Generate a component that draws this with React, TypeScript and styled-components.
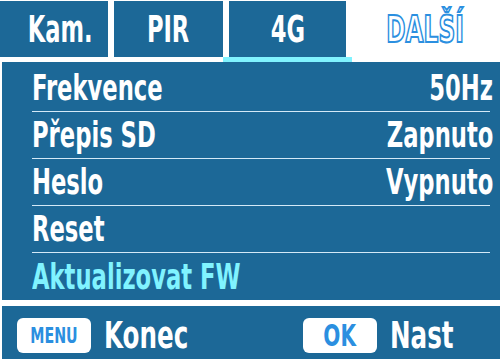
import styled, { createGlobalStyle } from 'styled-components'

const GlobalStyle = createGlobalStyle`
  html, body {
    margin: 0;
    padding: 0;
    background: #ffffff;
  }
  body {
    font-family: 'DejaVu Sans Condensed', 'DejaVu Sans', sans-serif;
    font-weight: 700;
  }
`

const BLUE = '#1c6897'
const CYAN = '#80f3ff'
const ACCENT = '#2b8fe0'

// the display font is very narrow, so squeeze the condensed face horizontally
const Squeeze = styled.span<{ $origin?: 'left' | 'right' | 'center'; $scale?: number }>`
  display: inline-block;
  white-space: nowrap;
  transform: scaleX(${(p) => p.$scale ?? 0.7});
  transform-origin: ${(p) => p.$origin ?? 'left'} center;
`

const Screen = styled.div`
  width: 500px;
  height: 359px;
  display: flex;
  flex-direction: column;
  overflow: hidden;
`

const TabBar = styled.div`
  display: flex;
  height: 57px;
  gap: 6px;
`

const Tab = styled.div<{ $width: number; $active?: boolean; $selected?: boolean; $shift?: number }>`
  position: relative;
  width: ${(p) => p.$width}px;
  display: flex;
  align-items: center;
  justify-content: center;
  padding-left: ${(p) => p.$shift ?? 0}px;
  box-sizing: border-box;
  background: ${(p) => (p.$selected ? '#ffffff' : BLUE)};
  color: #ffffff;
  font-size: 38px;
  margin-top: 1px;

  ${(p) =>
    p.$active &&
    `
    &::after {
      content: '';
      position: absolute;
      left: -6px;
      right: -6px;
      bottom: -5px;
      height: 5px;
      background: ${CYAN};
    }
  `}
`

const OutlineText = styled(Squeeze)`
  color: #ffffff;
  -webkit-text-stroke: 2px ${ACCENT};
  padding-left: 6px;
`

const Panel = styled.div`
  margin: 5px 0 0 2px;
  height: 238px;
  background: ${BLUE};
  padding-top: 3px;
  box-sizing: border-box;
  display: flex;
  flex-direction: column;
`

const Row = styled.div<{ $last?: boolean }>`
  height: 47px;
  box-sizing: border-box;
  margin: 0 10px 0 30px;
  display: flex;
  align-items: center;
  justify-content: space-between;
  border-bottom: ${(p) => (p.$last ? 'none' : '1.5px solid #d3e9f7')};
  font-size: 36px;
  padding-bottom: 1px;
`

const Label = styled(Squeeze)<{ $highlight?: boolean }>`
  color: ${(p) => (p.$highlight ? CYAN : '#ffffff')};
`

const Value = styled(Squeeze)`
  color: #ffffff;
  margin-right: -3px;
`

const BottomBar = styled.div`
  margin: 6px 0 0 2px;
  flex: 1;
  background: ${BLUE};
  display: flex;
  align-items: center;
  padding: 5px 0 0 15px;
  box-sizing: border-box;
`

const Hint = styled.div<{ $basis?: number }>`
  display: flex;
  align-items: center;
  gap: 13px;
  flex: 0 0 ${(p) => (p.$basis ? `${p.$basis}px` : 'auto')};
`

const Key = styled.span<{ $size: number }>`
  width: 74px;
  height: 35px;
  border-radius: 6px;
  background: #ffffff;
  color: ${ACCENT};
  display: flex;
  align-items: center;
  justify-content: center;
  font-size: ${(p) => p.$size}px;
`

const HintText = styled(Squeeze)`
  color: #ffffff;
  font-size: 38px;
`

const tabs = [
  { name: 'Kam.', width: 108, shift: 12 },
  { name: 'PIR', width: 109 },
  { name: '4G', width: 117, active: true },
]

const rows = [
  { label: 'Frekvence', value: '50Hz' },
  { label: 'Přepis SD', value: 'Zapnuto' },
  { label: 'Heslo', value: 'Vypnuto' },
  { label: 'Reset' },
  { label: 'Aktualizovat FW', highlight: true },
]

export default function App() {
  return (
    <>
      <GlobalStyle />
      <Screen>
        <TabBar>
          {tabs.map((t) => (
            <Tab key={t.name} $width={t.width} $active={t.active} $shift={t.shift}>
              <Squeeze $origin="center" $scale={0.66}>
                {t.name}
              </Squeeze>
            </Tab>
          ))}
          <Tab $width={154} $selected style={{ marginLeft: -6 }}>
            <OutlineText $origin="center" $scale={0.68}>
              DALŠÍ
            </OutlineText>
          </Tab>
        </TabBar>

        <Panel>
          {rows.map((r, i) => (
            <Row key={r.label} $last={i === rows.length - 1}>
              <Label $highlight={r.highlight}>{r.label}</Label>
              {r.value && <Value $origin="right">{r.value}</Value>}
            </Row>
          ))}
        </Panel>

        <BottomBar>
          <Hint $basis={286}>
            <Key $size={22}>
              <Squeeze $origin="center" $scale={0.72}>
                MENU
              </Squeeze>
            </Key>
            <HintText $scale={0.72}>Konec</HintText>
          </Hint>
          <Hint>
            <Key $size={31}>
              <Squeeze $origin="center" $scale={0.72}>
                OK
              </Squeeze>
            </Key>
            <HintText $scale={0.72}>Nast</HintText>
          </Hint>
        </BottomBar>
      </Screen>
    </>
  )
}
